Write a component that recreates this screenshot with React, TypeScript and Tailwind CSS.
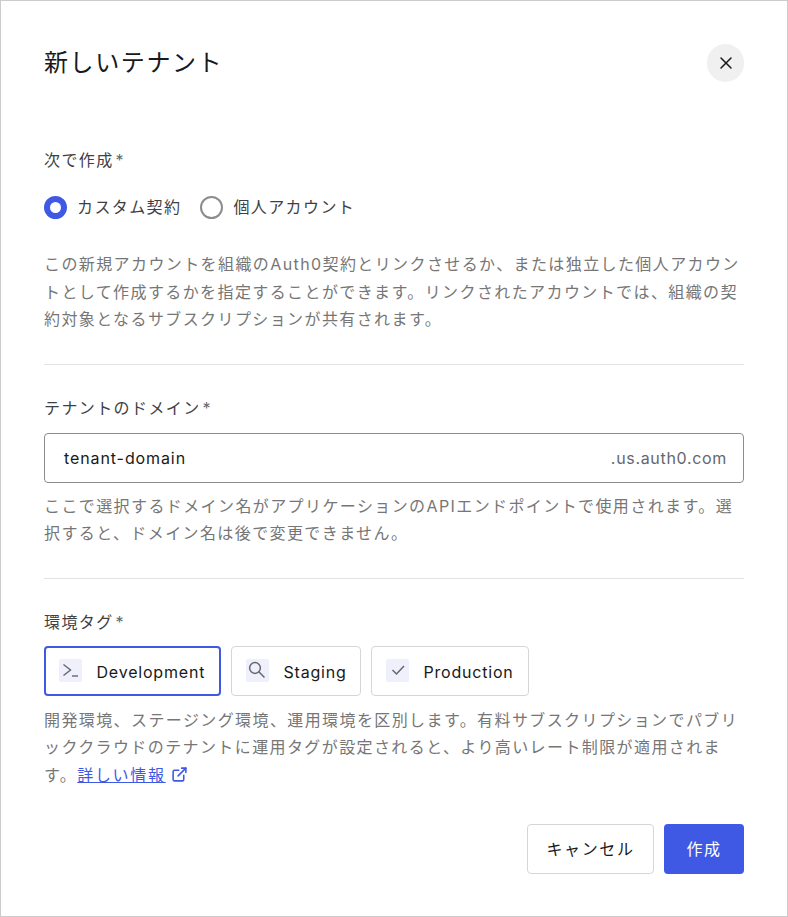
import React from 'react';
import { X, ExternalLink } from 'lucide-react';

const font = 'font-["Inter","Noto_Sans_CJK_JP",sans-serif]';

const TagButton = ({ icon, label, active, width }: { icon: React.ReactNode; label: string; active?: boolean; width: string }) => (
  <button
    className={`h-[50px] ${width} flex items-center rounded-[4px] bg-white text-[16px] tracking-[0.8px] text-[#191919] ${
      active ? 'border-2 border-[#3f59e4] pl-[13px]' : 'border border-[#d6d6d6] pl-[14px]'
    }`}
  >
    <span className="w-[23px] h-[23px] rounded-[2px] bg-[#eff0fb] flex items-center justify-center text-[#65676e] shrink-0">{icon}</span>
    <span className="ml-[14.5px] pt-[2px]">{label}</span>
  </button>
);

const Required = () => <span className="ml-[2px] text-[#65676e]">*</span>;

export default function App() {
  return (
    <div className={`${font} w-[788px] h-[917px] bg-white border border-[#cccccc] px-[43px] pt-[43px] text-[#191919]`}>
      <div className="flex items-center justify-between h-[38px]">
        <h1 className="text-[24px] font-normal leading-[38px] tracking-[1.6px] text-[#191919]">新しいテナント</h1>
        <button className="w-[37px] h-[38px] rounded-full bg-[#f0f0f0] flex items-center justify-center">
          <X className="w-[20px] h-[20px] text-[#191919]" strokeWidth={1.8} />
        </button>
      </div>

      <div className="mt-[66px] text-[16px] leading-[24px] tracking-[1.4px] text-[#3f3f46]">
        次で作成<Required />
      </div>

      <div className="mt-[23px] flex items-center h-[24px] text-[16px] tracking-[1.4px] text-[#3f3f46]">
        <span className="w-[23px] h-[23px] rounded-full border-[6px] border-[#3f59e4] bg-white" />
        <span className="ml-[10px]">カスタム契約</span>
        <span className="ml-[19px] w-[23px] h-[23px] rounded-full border-2 border-[#8c8c8c] bg-white" />
        <span className="ml-[10px]">個人アカウント</span>
      </div>

      <p className="mt-[32px] text-[16px] leading-[27.5px] tracking-[1.4px] text-[#767676]">
        この新規アカウントを組織のAuth0契約とリンクさせるか、または独立した個人アカウントとして作成するかを指定することができます。リンクされたアカウントでは、組織の契約対象となるサブスクリプションが共有されます。
      </p>

      <div className="mt-[30px] h-px bg-[#e3e3e3]" />

      <div className="mt-[31px] text-[16px] leading-[24px] tracking-[1.4px] text-[#3f3f46]">
        テナントのドメイン<Required />
      </div>

      <div className="mt-[13px] h-[50px] rounded-[4px] border border-[#8c8c8c] flex items-center justify-between pl-[19px] pr-[16px]">
        <span className="text-[16px] tracking-[0.9px] text-[#191919]">tenant-domain</span>
        <span className="text-[16px] tracking-[0.68px] text-[#65676e]">.us.auth0.com</span>
      </div>

      <p className="mt-[10px] text-[16px] leading-[27.5px] tracking-[1.4px] text-[#767676]">
        ここで選択するドメイン名がアプリケーションのAPIエンドポイントで使用されます。選択すると、ドメイン名は後で変更できません。
      </p>

      <div className="mt-[30px] h-px bg-[#e3e3e3]" />

      <div className="mt-[31px] text-[16px] leading-[24px] tracking-[1.4px] text-[#3f3f46]">
        環境タグ<Required />
      </div>

      <div className="mt-[12px] flex gap-[10px]">
        <TagButton
          active
          width="w-[177px]"
          label="Development"
          icon={
            <svg viewBox="0 0 23 23" className="w-[23px] h-[23px]" fill="none" stroke="currentColor" strokeWidth="1.4">
              <path d="M4.5 5.5l7 5.5-7 5.5" />
              <path d="M13 17h6" />
            </svg>
          }
        />
        <TagButton
          width="w-[130px]"
          label="Staging"
          icon={
            <svg viewBox="0 0 23 23" className="w-[23px] h-[23px]" fill="none" stroke="currentColor" strokeWidth="1.5">
              <circle cx="9" cy="9" r="5.4" />
              <path d="M12.8 12.8l5.7 5.7" />
            </svg>
          }
        />
        <TagButton
          width="w-[158px]"
          label="Production"
          icon={
            <svg viewBox="0 0 23 23" className="w-[23px] h-[23px]" fill="none" stroke="currentColor" strokeWidth="1.5">
              <path d="M6.5 11l4 4 7.5-8" />
            </svg>
          }
        />
      </div>

      <p className="mt-[11px] text-[16px] leading-[27.5px] tracking-[1.4px] text-[#767676]">
        開発環境、ステージング環境、運用環境を区別します。有料サブスクリプションでパブリッククラウドのテナントに運用タグが設定されると、より高いレート制限が適用されます。
        <a className="text-[#3f59e4] underline tracking-[1.7px]">詳しい情報</a>
        <ExternalLink className="inline ml-[5px] w-[17px] h-[17px] text-[#3f59e4] align-[-2px]" strokeWidth={2.2} />
      </p>

      <div className="mt-[35px] flex justify-end gap-[10px]">
        <button className="h-[50px] w-[127px] rounded-[4px] border border-[#d6d6d6] bg-white text-[16px] tracking-[1.6px] text-[#191919]">キャンセル</button>
        <button className="h-[50px] w-[80px] rounded-[4px] bg-[#3f59e4] text-[16px] tracking-[1.4px] text-white">作成</button>
      </div>
    </div>
  );
}
